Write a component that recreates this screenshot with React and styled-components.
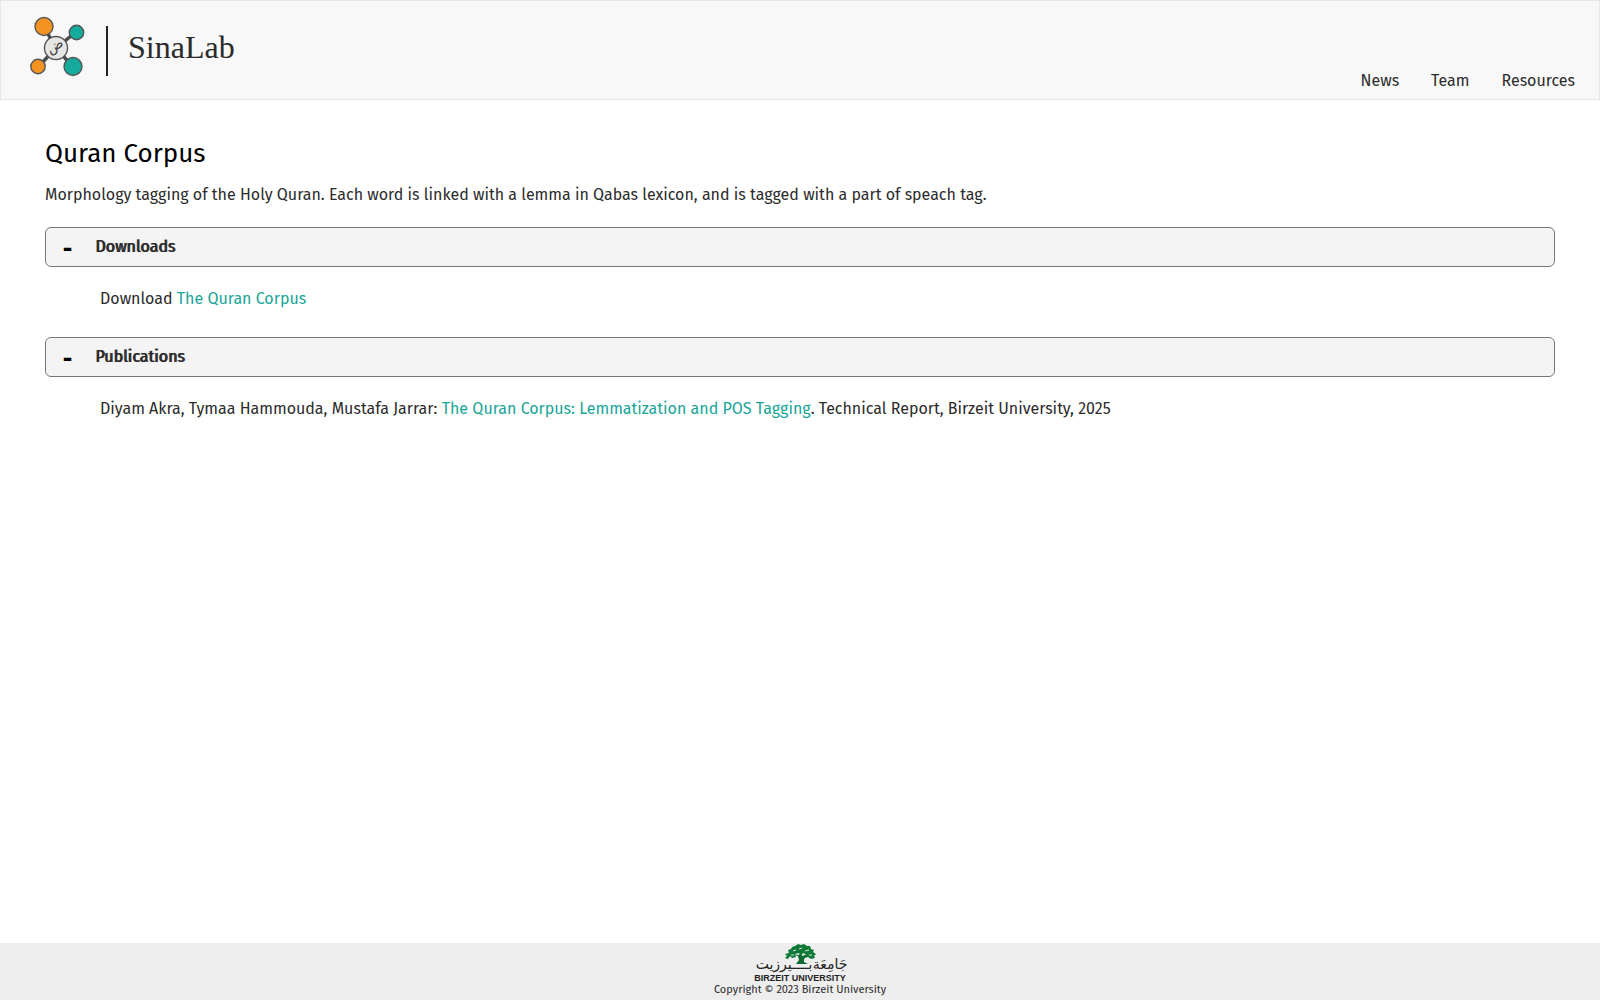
import React, { useState } from "react";
import styled, { createGlobalStyle } from "styled-components";

const GlobalStyle = createGlobalStyle`
  * {
    box-sizing: border-box;
  }
  body {
    margin: 0;
    background: white;
    color: #2b2b2b;
    font-family: "Fira Sans", "Noto Sans", sans-serif;
    font-size: 16px;
    line-height: 24px;
  }
`;

const Page = styled.div`
  display: flex;
  flex-direction: column;
  min-height: 100vh;
`;

const Header = styled.header`
  display: flex;
  justify-content: space-between;
  background: #f8f8f8;
  border: 1px solid #e7e7e7;
  padding: 14px 24px 6px 28px;
`;

const Brand = styled.a`
  display: flex;
  align-items: center;
  height: 64px;
  color: #2b2b2b;
  text-decoration: none;
`;

const BrandLine = styled.span`
  width: 2px;
  height: 50px;
  margin: 8px 20px 0 20px;
  background: #222;
`;

const BrandName = styled.span`
  font-family: "Liberation Serif", serif;
  font-size: 32px;
  line-height: 40px;
`;

const Nav = styled.nav`
  display: flex;
  align-items: flex-end;
  gap: 32px;
  padding-top: 54px;
`;

const NavLink = styled.a`
  color: #2b2b2b;
  text-decoration: none;
`;

const Main = styled.main`
  flex: 1;
  padding: 36px 45px;
`;

const Title = styled.h1`
  margin: 0 0 11px;
  color: black;
  font-size: 26px;
  font-weight: 400;
  line-height: 36px;
`;

const Intro = styled.p`
  margin: 0 0 20px;
`;

const SectionButton = styled.button`
  display: flex;
  align-items: center;
  width: 100%;
  height: 40px;
  padding: 0 17px;
  background: #f4f4f4;
  border: 1px solid #777;
  border-radius: 6px;
  color: #2b2b2b;
  font: inherit;
  text-shadow: 1px 0 #2b2b2b;
  cursor: pointer;
`;

const Sign = styled.span`
  width: 32px;
  padding-top: 4px;
  color: black;
  font-size: 22px;
  font-weight: 900;
  text-align: left;
  text-shadow: none;
`;

const SectionBody = styled.div`
  padding: 20px 55px 26px;
`;

const TextLink = styled.a`
  color: #17a598;
  text-decoration: none;
`;

const Footer = styled.footer`
  display: flex;
  flex-direction: column;
  align-items: center;
  height: 57px;
  background: #eee;
  font-size: 11px;
  line-height: 16px;
`;

function SinaLogo() {
  return (
    <svg width="57" height="62" viewBox="0 1 57 62" aria-hidden="true">
      <g stroke="#4a4a4a" strokeWidth="3.5">
        <path d="M15 12L27 33L47 17M9 52L27 33L44 52" fill="none" />
      </g>
      <g stroke="#555" strokeWidth="1.4">
        <circle cx="15" cy="11.500" r="9" fill="#f59322" />
        <circle cx="47.500" cy="17.500" r="7.200" fill="#14aa9c" />
        <circle cx="9" cy="51.500" r="7.200" fill="#f59322" />
        <circle cx="44" cy="51.500" r="9" fill="#14aa9c" />
        <circle cx="27" cy="33" r="11.500" fill="#e6e6e4" />
      </g>
      <text x="27" y="35" textAnchor="middle" fontFamily="DejaVu Sans, sans-serif" fontSize="14" fill="#444" transform="rotate(-30 27 33)">ض</text>
    </svg>
  );
}

function BirzeitLogo() {
  return (
    <svg width="94" height="39" viewBox="0 0 94 39" role="img" aria-label="Birzeit University">
      <path d="M43 21L46 17L45 13L38 11L46 12L48 7L49 13L57 10L51 16L51 19L55 21Z" fill="#0f6a33" />
      <path
        d="M42 3L45 1L48 2L51 1L54 3L57 3L58 6L61 7L60 9L63 11L61 13L62 15L58 16L55 14L52 15L54 12L50 10L48 13L46 10L42 11L43 14L39 15L37 13L35 16L32 15L34 13L32 11L36 10L35 7L38 6L39 4Z"
        fill="#0f7a37"
      />
      <path d="M40 8L43 7M46 6L49 5M52 8L56 7M38 12L41 12M56 12L59 12" stroke="#d8e8dc" strokeWidth="1" />
      <g fontFamily="DejaVu Sans, sans-serif" fill="#222" fontSize="14">
        <text x="77" y="26" textAnchor="middle">جَامِعَة</text>
        <text x="31" y="26" textAnchor="middle">بــــيرزيت</text>
      </g>
      <text x="47" y="38" textAnchor="middle" fontFamily="Liberation Sans, sans-serif" fontWeight="700" fontSize="9" fill="#222">BIRZEIT UNIVERSITY</text>
    </svg>
  );
}

function Section({ title, children }) {
  const [open, setOpen] = useState(true);
  return (
    <section>
      <SectionButton type="button" aria-expanded={open} onClick={() => setOpen(!open)}>
        <Sign>{open ? "-" : "+"}</Sign>
        {title}
      </SectionButton>
      {open && <SectionBody>{children}</SectionBody>}
    </section>
  );
}

function App() {
  return (
    <Page>
      <GlobalStyle />
      <Header>
        <Brand href="#home">
          <SinaLogo />
          <BrandLine />
          <BrandName>SinaLab</BrandName>
        </Brand>
        <Nav>
          <NavLink href="#news">News</NavLink>
          <NavLink href="#team">Team</NavLink>
          <NavLink href="#resources">Resources</NavLink>
        </Nav>
      </Header>
      <Main>
        <Title>Quran Corpus</Title>
        <Intro>
          Morphology tagging of the Holy Quran. Each word is linked with a lemma in Qabas lexicon, and is tagged with a part of speach tag.
        </Intro>
        <Section title="Downloads">
          Download <TextLink href="#corpus">The Quran Corpus</TextLink>
        </Section>
        <Section title="Publications">
          Diyam Akra, Tymaa Hammouda, Mustafa Jarrar:{" "}
          <TextLink href="#report">The Quran Corpus: Lemmatization and POS Tagging</TextLink>. Technical Report, Birzeit University, 2025
        </Section>
      </Main>
      <Footer>
        <BirzeitLogo />
        <span>Copyright © 2023 Birzeit University</span>
      </Footer>
    </Page>
  );
}

export default App;
